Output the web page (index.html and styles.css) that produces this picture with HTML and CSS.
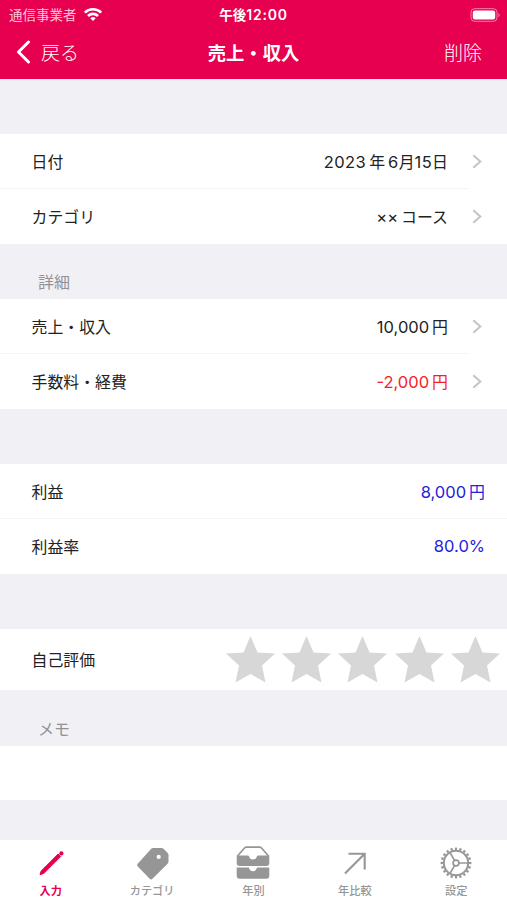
FILE: index.html
```html
<!DOCTYPE html>
<html lang="ja">
<head>
  <meta charset="UTF-8" />
  <meta name="viewport" content="width=device-width, initial-scale=1.0"/>
  <title>売上・収入</title>
  <link rel="stylesheet" href="styles.css">
</head>
<body>

<div class="app">
  <header>
    <div class="status-bar">
      <div class="carrier">
        <span>通信事業者</span>
        <svg width="20" height="15" viewBox="0 0 20 15" fill="none" stroke="#fff" stroke-width="2.6">
          <path d="M1.8 5.6a11.6 11.6 0 0 1 16.4 0M5 9a7 7 0 0 1 10 0"/>
          <path d="M7.3 11.3a3.8 3.8 0 0 1 5.4 0L10 14z" fill="#fff" stroke="none"/>
        </svg>
      </div>
      <span class="time">午後<span class="clock">12:00</span></span>
      <div class="battery">
        <svg width="31" height="14" viewBox="0 0 31 14">
          <rect x="1" y=".7" width="26" height="12.6" rx="3.6" fill="none" stroke="#fff" stroke-opacity=".5"/>
          <rect x="2.8" y="2.5" width="22.4" height="9" rx="2" fill="#fff"/>
          <path d="M28.5 4.7q2.2 2.3 0 4.6z" fill="#fff" fill-opacity=".55"/>
        </svg>
      </div>
    </div>
    <div class="nav-bar">
      <a class="back">
        <svg width="15" height="24" viewBox="0 0 15 24" fill="none" stroke="#fff" stroke-width="3" stroke-linecap="round" stroke-linejoin="round"><path d="M12.5 2 2.5 12l10 10"/></svg>
        <span>戻る</span>
      </a>
      <h1>売上・収入</h1>
      <a class="delete">削除</a>
    </div>
  </header>

  <main>
    <section class="group first">
      <div class="row link">
        <span class="label">日付</span>
        <span class="value date"><b>2023</b><i class="thin"></i>年<i class="thin"></i><b>6</b>月<b>15</b>日</span>
        <svg class="chevron" viewBox="0 0 10 15"><path d="M1.3 1.2 8.3 7.5l-7 6.3"/></svg>
      </div>
      <div class="row link">
        <span class="label">カテゴリ</span>
        <span class="value"><b>××</b><i class="thin"></i>コース</span>
        <svg class="chevron" viewBox="0 0 10 15"><path d="M1.3 1.2 8.3 7.5l-7 6.3"/></svg>
      </div>
    </section>

    <h2>詳細</h2>
    <section class="group">
      <div class="row link">
        <span class="label">売上・収入</span>
        <span class="value"><b>10,000</b><i class="thin"></i>円</span>
        <svg class="chevron" viewBox="0 0 10 15"><path d="M1.3 1.2 8.3 7.5l-7 6.3"/></svg>
      </div>
      <div class="row link">
        <span class="label">手数料・経費</span>
        <span class="value red"><b>-2,000</b><i class="thin"></i>円</span>
        <svg class="chevron" viewBox="0 0 10 15"><path d="M1.3 1.2 8.3 7.5l-7 6.3"/></svg>
      </div>
    </section>

    <section class="group spaced">
      <div class="row">
        <span class="label">利益</span>
        <span class="value blue"><b>8,000</b><i class="thin"></i>円</span>
      </div>
      <div class="row">
        <span class="label">利益率</span>
        <span class="value blue"><b>80.0%</b></span>
      </div>
    </section>

    <section class="group spaced">
      <div class="row rating">
        <span class="label">自己評価</span>
        <div class="stars">
          <svg viewBox="0 0 49 47"><path d="M24.5 0 31.5 16.5 49 17.5 36 29.5 39.5 46.5 24.5 38 9.5 46.5 13 29.5 0 17.5 17.5 16.5z"/></svg>
          <svg viewBox="0 0 49 47"><path d="M24.5 0 31.5 16.5 49 17.5 36 29.5 39.5 46.5 24.5 38 9.5 46.5 13 29.5 0 17.5 17.5 16.5z"/></svg>
          <svg viewBox="0 0 49 47"><path d="M24.5 0 31.5 16.5 49 17.5 36 29.5 39.5 46.5 24.5 38 9.5 46.5 13 29.5 0 17.5 17.5 16.5z"/></svg>
          <svg viewBox="0 0 49 47"><path d="M24.5 0 31.5 16.5 49 17.5 36 29.5 39.5 46.5 24.5 38 9.5 46.5 13 29.5 0 17.5 17.5 16.5z"/></svg>
          <svg viewBox="0 0 49 47"><path d="M24.5 0 31.5 16.5 49 17.5 36 29.5 39.5 46.5 24.5 38 9.5 46.5 13 29.5 0 17.5 17.5 16.5z"/></svg>
        </div>
      </div>
    </section>

    <h2 class="memo-title">メモ</h2>
    <section class="group">
      <div class="row memo"></div>
    </section>
  </main>

  <nav class="tab-bar">
    <a class="tab active">
      <svg viewBox="0 0 34 34">
        <path d="M6 28.6 7.2 25 24.2 8l2.5 2.5-17 17z" fill="currentColor" stroke="currentColor" stroke-linejoin="round"/>
        <circle cx="27.4" cy="7.4" r="2.1" fill="currentColor"/>
      </svg>
      <span>入力</span>
    </a>
    <a class="tab">
      <svg viewBox="0 0 34 34">
        <path fill="currentColor" fill-rule="evenodd" d="M18 2h8.5q1.2 0 2 .8l4.2 4.2q.8.8.8 2v6.8q0 1.2-.9 2L17.4 32.8q-1.4 1.3-2.7 0L2.8 20.4q-1.3-1.4.1-2.8L16 2.9q.8-.9 2-.9zM23.7 8.8a2.1 2.1 0 1 0 0 4.2a2.1 2.1 0 1 0 0-4.2z"/>
      </svg>
      <span>カテゴリ</span>
    </a>
    <a class="tab">
      <svg viewBox="0 0 34 34">
        <path d="M1.5 10 8.5 2q.7-.9 1.8-.9h13.4q1.1 0 1.8.9l7 8" fill="none" stroke="currentColor" stroke-width="1.7"/>
        <path d="M.7 9.5h11.2q.9 0 1.2.9.7 3 3.9 3t3.9-3q.3-.9 1.2-.9h11.2v7.3q0 3.2-3 3.2H3.7q-3 0-3-3.2zM.7 21.5h12.2q.9 3.8 4.1 3.8t4.1-3.8h12.2v8q0 3.2-3 3.2H3.7q-3 0-3-3.2z" fill="currentColor"/>
      </svg>
      <span>年別</span>
    </a>
    <a class="tab">
      <svg viewBox="0 0 34 34" fill="none" stroke="currentColor" stroke-width="2.1">
        <path d="M7 27.5 26.7 7.8M10.5 7.7h16.2v15.8"/>
      </svg>
      <span>年比較</span>
    </a>
    <a class="tab">
      <svg viewBox="0 0 34 34" fill="none" stroke="currentColor">
        <circle cx="17" cy="17" r="12.2" stroke-width="2"/>
        <circle cx="17" cy="17" r="14.2" stroke-width="2.4" pathLength="40" stroke-dasharray="1 1" stroke-dashoffset=".5"/>
        <circle cx="17" cy="17" r="2.9" stroke-width="1.7"/>
        <path d="M20 17h9M15.5 14.4 10.9 6.4M15.5 19.6 10.9 27.6" stroke-width="1.7"/>
      </svg>
      <span>設定</span>
    </a>
  </nav>
</div>

</body>
</html>
```

FILE: styles.css
```css
* {
  box-sizing: border-box;
}
body {
  margin: 0;
  background-color: #f0f0f5;
  font-family: Inter, 'Noto Sans CJK JP', sans-serif;
  color: #222;
}
.app {
  height: 900px;
  display: flex;
  flex-direction: column;
  overflow: hidden;
}
header {
  height: 79px;
  background: #e6004f;
  color: #fff;
}
.status-bar {
  height: 27px;
  padding: 0 6px 0 9px;
  display: grid;
  grid-template-columns: 1fr auto 1fr;
  align-items: center;
  font-size: 13.5px;
  line-height: 27px;
}
.carrier {
  display: flex;
  align-items: center;
  gap: 6px;
  color: #ffc3d8;
}
.carrier span, .time {
  padding-top: 1px;
}
.carrier svg {
  margin-top: -1px;
}
.time {
  font-weight: 600;
  margin-left: -3px;
}
.clock {
  font-size: 14px;
  letter-spacing: 0.8px;
}
.battery {
  display: flex;
  justify-content: flex-end;
}
.nav-bar {
  height: 50px;
  padding: 0 16px;
  display: grid;
  grid-template-columns: 1fr auto 1fr;
  align-items: center;
}
.back {
  display: flex;
  align-items: center;
  gap: 10px;
}
.back, .delete {
  font-size: 19px;
  font-weight: 300;
}
.back span, .delete {
  padding-bottom: 2px;
}
.delete {
  text-align: right;
  padding-right: 9px;
}
h1 {
  margin: 0;
  font-size: 18.3px;
  font-weight: 600;
}
main {
  flex: 1;
}
.group {
  background: #fff;
}
.first {
  margin-top: 55px;
}
.spaced {
  margin-top: 55px;
}
.row {
  height: 55px;
  padding: 0 22px 0 31.5px;
  display: flex;
  align-items: center;
  font-size: 15.9px;
  background: linear-gradient(#f3f3f5, #f3f3f5) left bottom / 100% 1px no-repeat;
}
.link {
  padding-right: 25px;
  background-size: 469px 1px;
}
.row:last-child {
  background: none;
}
.label {
  flex: 1;
}
.label, .value {
  padding-bottom: 1px;
}
.value b {
  font-size: 16.5px;
  font-weight: 400;
}
.date b {
  letter-spacing: 0.4px;
}
.thin {
  display: inline-block;
  width: 3px;
}
.red {
  color: #f52222;
}
.blue {
  color: #2222dc;
}
.chevron {
  width: 10px;
  height: 15px;
  margin-left: 24px;
  fill: none;
  stroke: #c5c5c7;
  stroke-width: 2.1;
}
h2 {
  height: 55px;
  margin: 0;
  padding: 26px 0 0 38px;
  font-size: 16px;
  line-height: 24px;
  font-weight: 400;
  color: #929296;
}
.memo-title {
  height: 56px;
  padding-top: 27px;
}
.rating {
  height: 61px;
  padding-right: 7px;
}
.stars {
  display: flex;
  gap: 7.3px;
}
.stars svg {
  width: 49px;
  height: 47px;
  fill: #d7d7d7;
}
.memo {
  height: 54px;
}
.tab-bar {
  height: 60px;
  background: #fff;
  display: grid;
  grid-template-columns: repeat(5, 1fr);
}
.tab {
  display: flex;
  flex-direction: column;
  align-items: center;
  padding-top: 6px;
  font-size: 11.2px;
  line-height: 16px;
  font-weight: 500;
  color: #969696;
}
.tab svg {
  width: 34px;
  height: 34px;
}
.tab span {
  margin-top: 3px;
}
.active {
  color: #e6004f;
}
.active span {
  font-weight: 700;
}
```
